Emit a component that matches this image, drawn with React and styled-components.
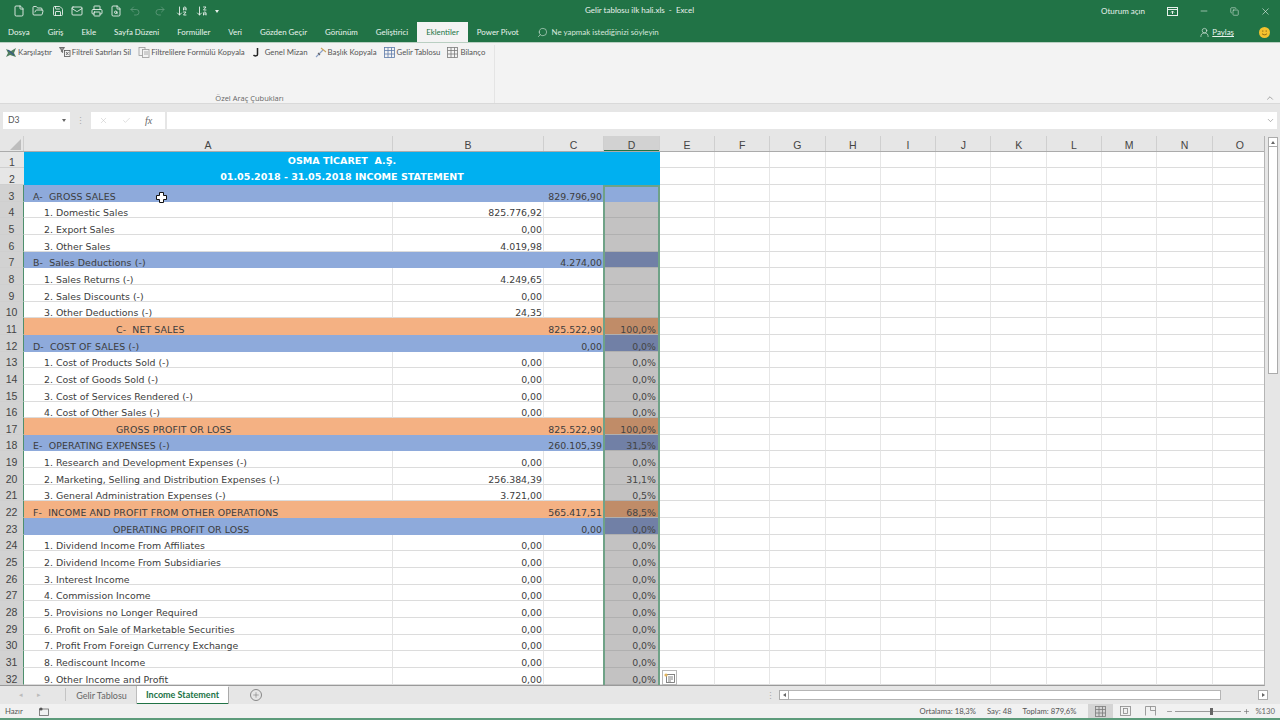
import React from "react"
import styled, { createGlobalStyle } from "styled-components"
import { File, FolderOpen, Save, Undo2, Redo2, ArrowDownAZ, ArrowDownZA, Search, UserRound, X, Minus, Check, Plus, ChevronUp, ChevronDown, Printer, FileSearch, Mail, Copy } from "lucide-react"

const GlobalStyle = createGlobalStyle`
  html, body { margin: 0; padding: 0; background: #e6e6e6; }
  body { font-family: Lato, "Open Sans", "Liberation Sans", sans-serif; overflow: hidden; }
`
const Page = styled.div`
  width: 1280px;
  height: 720px;
  display: flex;
  flex-direction: column;
  overflow: hidden;
  color: #444;
`
const TitleBar = styled.div`
  height: 22px;
  background: #217346;
  color: #e8f1ec;
  display: grid;
  grid-template-columns: 1fr 1fr;
  position: relative;
  font-size: 8px;
`
const Quick = styled.div`
  display: flex;
  align-items: center;
  padding-left: 13px;
  gap: 7.4px;
`
const WindowControls = styled.div`
  display: flex;
  align-items: center;
  justify-content: flex-end;
  gap: 20px;
  padding-right: 9px;
`
const SignIn = styled.span`
  margin-right: 2px;
`
const WinButton = styled.span`
  width: 11px;
  display: flex;
  justify-content: center;
`
const DocTitle = styled.div`
  position: absolute;
  left: 585px;
  top: 0;
  line-height: 21px;
  white-space: pre;
`
const TabBar = styled.div`
  height: 20px;
  background: #217346;
  display: flex;
  align-items: stretch;
  padding-left: 8px;
  color: #eaf3ee;
  font-size: 7.9px;
`
const Tab = styled.div`
  display: flex;
  align-items: center;
  justify-content: center;
  margin-right: 18px;
  ${p => p.$active && `
    background: #f3f3f3;
    color: #217346;
    padding: 0 9px;
    margin-left: -9px;
    margin-right: 9px;
  `}
`
const TellMe = styled.div`
  display: flex;
  align-items: center;
  gap: 4px;
  color: #d6e6dd;
`
const ShareArea = styled.div`
  margin-left: auto;
  display: flex;
  align-items: center;
  gap: 25px;
  padding-right: 10px;
`
const Share = styled.span`
  display: flex;
  align-items: center;
  gap: 2px;
  text-decoration: underline;
  text-decoration-thickness: 0.5px;
  text-underline-offset: 1px;
`
const Smile = styled.span`
  width: 11px;
  height: 11px;
  border-radius: 50%;
  background: #f4c22e;
  display: flex;
`
const Ribbon = styled.div`
  height: 62px;
  background: #f3f3f3;
  border-top: 1px solid #b9cfc2;
  border-bottom: 1px solid #d9d9d9;
  box-sizing: border-box;
  display: flex;
  position: relative;
`
const RibbonGroup = styled.div`
  width: 495px;
  margin: 2px 0 0;
  padding: 0 0 0 5px;
  box-sizing: border-box;
  border-right: 1px solid #e4e4e4;
  display: flex;
  flex-direction: column;
  justify-content: space-between;
`
const Tools = styled.div`
  display: flex;
  align-items: center;
  gap: 7px;
  height: 14px;
  font-size: 7.8px;
  color: #555;
`
const Tool = styled.span`
  display: flex;
  align-items: center;
  gap: ${p => p.$gap ?? 1}px;
  white-space: nowrap;
`
const GroupLabel = styled.div`
  text-align: center;
  font-family: "Open Sans", sans-serif;
  font-size: 7.5px;
  color: #666;
  line-height: 10px;
`
const Collapse = styled.span`
  position: absolute;
  right: 5px;
  bottom: 0;
  color: #777;
  display: flex;
`
const FormulaRow = styled.div`
  height: 32px;
  display: flex;
  align-items: center;
  gap: 2px;
  padding: 0 3px;
  background: #e6e6e6;
  box-sizing: border-box;
`
const NameBox = styled.div`
  width: 67px;
  height: 17px;
  background: #fff;
  font-size: 8.6px;
  color: #555;
  display: flex;
  align-items: center;
  justify-content: space-between;
  padding: 0 4px 0 5px;
  box-sizing: border-box;
`
const Caret = styled.span`
  width: 0;
  height: 0;
  border-left: 2.5px solid transparent;
  border-right: 2.5px solid transparent;
  border-top: 3px solid ${p => p.$color || "#666"};
`
const Grip = styled.span`
  width: 17px;
  text-align: center;
  color: #aaa;
  font-size: 9px;
`
const FxBox = styled.div`
  width: 74px;
  height: 17px;
  background: #fff;
  display: flex;
  align-items: center;
  gap: 14px;
  padding-left: 8px;
  box-sizing: border-box;
  color: #c4c4c4;
`
const Fx = styled.span`
  font-family: "Liberation Serif", serif;
  font-style: italic;
  font-size: 10px;
  color: #666;
`
const FormulaInput = styled.div`
  flex: 1;
  height: 17px;
  background: #fff;
  display: flex;
  align-items: center;
  justify-content: flex-end;
  padding-right: 2px;
  color: #777;
`
const SheetArea = styled.div`
  height: 550px;
  display: flex;
  background: #e6e6e6;
`
const SheetGrid = styled.div`
  width: 1265px;
  position: relative;
  overflow: hidden;
  background: #fff;
  border-right: 1px solid #b5b5b5;
  border-bottom: 1px solid #9a9a9a;
  box-sizing: border-box;
`
const COLUMNS = "24px 369px 151px 60px 56px 55px 55.3px 55.3px 55.3px 55.3px 55.3px 55.3px 55.3px 55.3px 55.3px 55.3px"
const HeaderRow = styled.div`
  display: grid;
  grid-template-columns: ${COLUMNS};
  height: 16px;
  border-bottom: 1px solid #ababab;
  box-sizing: border-box;
`
const ColHead = styled.div`
  display: flex;
  align-items: center;
  justify-content: center;
  padding-top: 3px;
  box-sizing: border-box;
  font-family: "Liberation Sans", sans-serif;
  font-size: 10.5px;
  line-height: 11px;
  color: #444;
  border-right: 1px solid #cfcfcf;
  background: ${p => p.$selected ? "#d2d2d2" : "#e6e6e6"};
  ${p => p.$selected && "box-shadow: inset 0 -1px 0 #217346;"}
`
const Corner = styled(ColHead)`
  position: relative;
`
const CornerMark = styled.span`
  position: absolute;
  right: 2px;
  bottom: 1px;
  width: 0;
  height: 0;
  border-left: 11px solid transparent;
  border-bottom: 11px solid #bdbdbd;
`
const Row = styled.div`
  display: grid;
  grid-template-columns: ${COLUMNS};
  grid-template-rows: ${p => p.$h}px;
  height: ${p => p.$h}px;
`
const RowHead = styled.div`
  display: flex;
  align-items: center;
  justify-content: center;
  padding-top: 5px;
  line-height: 10px;
  font-family: "Liberation Sans", sans-serif;
  font-size: 10.5px;
  color: #444;
  box-sizing: border-box;
  border-bottom: 1px solid #cfcfcf;
  background: ${p => p.$selected ? "#d2d2d2" : "#e6e6e6"};
  ${p => p.$selected && "border-right: 1px solid #4d8f6d;"}
`
const BAND = { blue: "#8eaadb", orange: "#f4b183", none: "#fff" }
const DIM = { blue: "#7180a6", orange: "#c08c68", none: "#c3c2c2" }
const Cell = styled.div`
  font-family: "DejaVu Sans", sans-serif;
  font-size: 9.4px;
  line-height: 9px;
  letter-spacing: ${p => p.$band === "none" ? 0 : 0.1}px;
  color: #3c3c3c;
  white-space: pre;
  display: flex;
  align-items: center;
  box-sizing: border-box;
  padding-top: 6px;
  background: ${p => BAND[p.$band]};
  border-bottom: 1px solid ${p => p.$band === "none" ? "#dcdcdc" : BAND[p.$band]};
  border-right: 1px solid ${p => p.$band === "none" ? "#e4e4e4" : BAND[p.$band]};
  padding-left: ${p => p.$indent || 0}px;
`
const NumCell = styled(Cell)`
  justify-content: flex-end;
  letter-spacing: 0;
  padding-right: 1px;
`
const PctCell = styled(NumCell)`
  background: ${p => p.$active ? BAND.blue : DIM[p.$band]};
  border-bottom: 1px solid ${p => p.$active ? BAND.blue : "#b0b0b0"};
  border-right: none;
  padding-right: 4px;
  color: #444;
`
const BlankCell = styled.div`
  box-sizing: border-box;
  background: #fff;
  border-bottom: 1px solid #dcdcdc;
  border-right: 1px solid #e6e6e6;
`
const TitleCell = styled.div`
  grid-column: span 4;
  background: #00b0f0;
  color: #fff;
  font-family: "DejaVu Sans", sans-serif;
  font-weight: 700;
  font-size: 9.55px;
  line-height: 12px;
  white-space: pre;
  display: flex;
  align-items: center;
  justify-content: center;
  padding-top: 1px;
  box-sizing: border-box;
`
const Selection = styled.div`
  position: absolute;
  left: 603px;
  top: 49px;
  width: 57px;
  bottom: -2px;
  border: 2px solid #6fa287;
  box-sizing: border-box;
  pointer-events: none;
`
const QuickAnalysis = styled.div`
  position: absolute;
  left: 662px;
  top: 534px;
  width: 15px;
  height: 15px;
  background: #fff;
  border: 1px solid #b8b8b8;
  box-sizing: border-box;
  display: flex;
  align-items: center;
  justify-content: center;
`
const CellCursor = styled.div`
  position: absolute;
  left: 156px;
  top: 56px;
  display: flex;
`
const VScroll = styled.div`
  width: 15px;
  display: flex;
  flex-direction: column;
  padding: 1px 2px 0 3px;
  box-sizing: border-box;
`
const ScrollButton = styled.div`
  width: 10px;
  height: 10px;
  flex-shrink: 0;
  background: #fff;
  border: 1px solid #ababab;
  box-sizing: border-box;
  display: flex;
  align-items: center;
  justify-content: center;
`
const Arrow = styled.span`
  width: 0;
  height: 0;
  ${p => p.$dir === "up" && "border-left: 2.5px solid transparent; border-right: 2.5px solid transparent; border-bottom: 3px solid #666;"}
  ${p => p.$dir === "left" && "border-top: 2.5px solid transparent; border-bottom: 2.5px solid transparent; border-right: 3px solid #666;"}
  ${p => p.$dir === "right" && "border-top: 2.5px solid transparent; border-bottom: 2.5px solid transparent; border-left: 3px solid #666;"}
`
const VThumb = styled.div`
  width: 10px;
  height: 227px;
  background: #fff;
  border: 1px solid #ababab;
  border-top: none;
  box-sizing: border-box;
`
const SheetTabs = styled.div`
  height: 18px;
  display: flex;
  align-items: stretch;
  background: #e6e6e6;
  font-size: 9px;
  color: #666;
`
const SheetNav = styled.div`
  width: 66px;
  display: flex;
  align-items: center;
  justify-content: center;
  gap: 14px;
  padding-right: 6px;
  box-sizing: border-box;
  border-right: 1px solid #c4c4c4;
  margin: 2px 0 3px;
  color: #bbb;
  font-size: 7px;
`
const SheetTab = styled.div`
  width: 71px;
  display: flex;
  align-items: center;
  justify-content: center;
`
const ActiveSheetTab = styled(SheetTab)`
  width: 91px;
  background: #fff;
  color: #217346;
  font-weight: 700;
  box-shadow: 1px 1px 0 #aaa, -1px 0 0 #bdbdbd;
  border-bottom: 1px solid #217346;
  box-sizing: border-box;
`
const AddSheet = styled.div`
  width: 10px;
  height: 10px;
  margin: 3px 0 0 22px;
  border: 1px solid #888;
  border-radius: 50%;
  display: flex;
  align-items: center;
  justify-content: center;
  color: #666;
`
const HScroll = styled.div`
  margin-left: auto;
  width: 514px;
  display: flex;
  align-items: center;
  padding-right: 12px;
  box-sizing: border-box;
`
const HGrip = styled.span`
  width: 13px;
  color: #aaa;
  font-size: 9px;
`
const HThumb = styled.div`
  width: 432px;
  height: 10px;
  background: #fff;
  border: 1px solid #b5b5b5;
  border-left: none;
  box-sizing: border-box;
`
const HTrack = styled.div`
  flex: 1;
`
const StatusBar = styled.div`
  height: 14px;
  background: #f1f1f1;
  display: flex;
  align-items: center;
  font-size: 7.7px;
  color: #555;
  padding-left: 5px;
`
const MacroIcon = styled.span`
  margin-left: 16px;
  display: flex;
`
const Stats = styled.div`
  margin-left: auto;
  display: flex;
  gap: 11px;
  margin-right: 12px;
`
const ViewButton = styled.div`
  width: 25px;
  height: 14px;
  display: flex;
  align-items: center;
  justify-content: center;
  background: ${p => p.$active ? "#d4d4d4" : "transparent"};
`
const Zoom = styled.div`
  display: flex;
  align-items: center;
  gap: 2px;
  margin-left: 3px;
  padding-right: 5px;
  color: #666;
`
const Slider = styled.div`
  width: 66px;
  height: 1px;
  background: #9a9a9a;
  position: relative;
`
const SliderThumb = styled.span`
  position: absolute;
  left: 35px;
  top: -3px;
  width: 3px;
  height: 7px;
  background: #666;
`
const ZoomValue = styled.span`
  margin-left: 3px;
`
const BottomLine = styled.div`
  height: 2px;
  background: #5d9b7b;
`

const qa = { size: 12, strokeWidth: 1.7, color: "#f2f7f4" }

const rows = [
  { n: 3, band: "blue", a: "A-  GROSS SALES", c: "829.796,90", active: true },
  { n: 4, a: "1. Domestic Sales", b: "825.776,92" },
  { n: 5, a: "2. Export Sales", b: "0,00" },
  { n: 6, a: "3. Other Sales", b: "4.019,98" },
  { n: 7, band: "blue", a: "B-  Sales Deductions (-)", c: "4.274,00" },
  { n: 8, a: "1. Sales Returns (-)", b: "4.249,65" },
  { n: 9, a: "2. Sales Discounts (-)", b: "0,00" },
  { n: 10, a: "3. Other Deductions (-)", b: "24,35" },
  { n: 11, band: "orange", center: 92, a: "C-  NET SALES", c: "825.522,90", d: "100,0%" },
  { n: 12, band: "blue", a: "D-  COST OF SALES (-)", c: "0,00", d: "0,0%" },
  { n: 13, a: "1. Cost of Products Sold (-)", b: "0,00", d: "0,0%" },
  { n: 14, a: "2. Cost of Goods Sold (-)", b: "0,00", d: "0,0%" },
  { n: 15, a: "3. Cost of Services Rendered (-)", b: "0,00", d: "0,0%" },
  { n: 16, a: "4. Cost of Other Sales (-)", b: "0,00", d: "0,0%" },
  { n: 17, band: "orange", center: 92, a: "GROSS PROFIT OR LOSS", c: "825.522,90", d: "100,0%" },
  { n: 18, band: "blue", a: "E-  OPERATING EXPENSES (-)", c: "260.105,39", d: "31,5%" },
  { n: 19, a: "1. Research and Development Expenses (-)", b: "0,00", d: "0,0%" },
  { n: 20, a: "2. Marketing, Selling and Distribution Expenses (-)", b: "256.384,39", d: "31,1%" },
  { n: 21, a: "3. General Administration Expenses (-)", b: "3.721,00", d: "0,5%" },
  { n: 22, band: "orange", a: "F-  INCOME AND PROFIT FROM OTHER OPERATIONS", c: "565.417,51", d: "68,5%" },
  { n: 23, band: "blue", center: 89, a: "OPERATING PROFIT OR LOSS", c: "0,00", d: "0,0%" },
  { n: 24, a: "1. Dividend Income From Affiliates", b: "0,00", d: "0,0%" },
  { n: 25, a: "2. Dividend Income From Subsidiaries", b: "0,00", d: "0,0%" },
  { n: 26, a: "3. Interest Income", b: "0,00", d: "0,0%" },
  { n: 27, a: "4. Commission Income", b: "0,00", d: "0,0%" },
  { n: 28, a: "5. Provisions no Longer Required", b: "0,00", d: "0,0%" },
  { n: 29, a: "6. Profit on Sale of Marketable Securities", b: "0,00", d: "0,0%" },
  { n: 30, a: "7. Profit From Foreign Currency Exchange", b: "0,00", d: "0,0%" },
  { n: 31, a: "8. Rediscount Income", b: "0,00", d: "0,0%" },
  { n: 32, a: "9. Other Income and Profit", b: "0,00", d: "0,0%" },
]
const heads = ["A", "B", "C", "D", "E", "F", "G", "H", "I", "J", "K", "L", "M", "N", "O"]
const blanks = heads.slice(4)

// rows are 16.65px in the real sheet, whole pixels keep the grid lines crisp
function rowHeight(n) {
  const top = i => Math.round((i - 3) * 16.655)
  return top(n + 1) - top(n)
}

function Blanks() {
  return blanks.map(h => <BlankCell key={h} />)
}

function DataRow({ n, band = "none", a, b, c, d, center, active }) {
  const indent = center ?? (band === "none" ? 20 : 9)
  return (
    <Row $h={rowHeight(n)}>
      <RowHead $selected>{n}</RowHead>
      <Cell $band={band} $indent={indent}>{a}</Cell>
      <NumCell $band={band}>{b}</NumCell>
      <NumCell $band={band}>{c}</NumCell>
      <PctCell $band={band} $active={active}>{d}</PctCell>
      <Blanks />
    </Row>
  )
}

function SmallGrid({ color = "#7a7a7a" }) {
  return (
    <svg width="11" height="11" viewBox="0 0 11 11" fill="none" stroke={color} strokeWidth="0.8">
      <rect x="0.5" y="0.5" width="10" height="10" />
      <path d="M0.5 3.5h10M0.5 7h10M4 0.5v10M7.5 0.5v10" />
    </svg>
  )
}

export default function App() {
  return (
    <Page>
      <GlobalStyle />
      <TitleBar>
        <Quick>
          <File {...qa} />
          <FolderOpen {...qa} />
          <Save {...qa} />
          <Mail {...qa} />
          <Printer {...qa} />
          <FileSearch {...qa} />
          <Undo2 {...qa} color="#5f9a7b" />
          <Redo2 {...qa} color="#5f9a7b" style={{ marginLeft: 5 }} />
          <ArrowDownAZ {...qa} style={{ marginLeft: 3 }} />
          <ArrowDownZA {...qa} />
          <Caret $color="#e8f1ec" />
        </Quick>
        <DocTitle>Gelir tablosu ilk hali.xls  -  Excel</DocTitle>
        <WindowControls>
          <SignIn>Oturum açın</SignIn>
          <WinButton>
            <svg width="11" height="9" viewBox="0 0 11 9" fill="none" stroke="#e8f1ec">
              <rect x="0.5" y="0.5" width="10" height="8" />
              <path d="M0.5 2.5h10M5.5 7V4M4 5.5l1.5-1.5L7 5.5" />
            </svg>
          </WinButton>
          <WinButton><Minus size={10} strokeWidth={1.4} /></WinButton>
          <WinButton><Copy size={9} strokeWidth={1.4} /></WinButton>
          <WinButton><X size={11} strokeWidth={1.3} /></WinButton>
        </WindowControls>
      </TitleBar>
      <TabBar>
        <Tab>Dosya</Tab>
        <Tab>Giriş</Tab>
        <Tab>Ekle</Tab>
        <Tab>Sayfa Düzeni</Tab>
        <Tab>Formüller</Tab>
        <Tab>Veri</Tab>
        <Tab>Gözden Geçir</Tab>
        <Tab>Görünüm</Tab>
        <Tab>Geliştirici</Tab>
        <Tab $active>Eklentiler</Tab>
        <Tab>Power Pivot</Tab>
        <TellMe>
          <Search size={11} strokeWidth={1.3} style={{ transform: "scaleX(-1)" }} />
          Ne yapmak istediğinizi söyleyin
        </TellMe>
        <ShareArea>
          <Share><UserRound size={11} strokeWidth={1.3} />Paylaş</Share>
          <Smile>
            <svg width="11" height="11" viewBox="0 0 11 11" fill="none" stroke="#7a5a10" strokeWidth="0.8">
              <path d="M3.8 3.4v1.4M7.2 3.4v1.4M3 6.6c.8 1.6 4.2 1.6 5 0" />
            </svg>
          </Smile>
        </ShareArea>
      </TabBar>
      <Ribbon>
        <RibbonGroup>
          <Tools>
            <Tool>
              <svg width="12" height="11" viewBox="0 0 12 11"><path d="M1 2l5 2 5-3-2 5 2 4-6-2-4 2 2-4z" fill="#4f7d5f" /><path d="M3 3l6 5" stroke="#2d4a9a" /></svg>
              Karşılaştır
            </Tool>
            <Tool>
              <svg width="12" height="11" viewBox="0 0 12 11" fill="none" stroke="#555" strokeWidth="0.8"><path d="M0.5 0.5h5L3.6 3v2.5L2.4 4.6V3z" fill="#999" /><rect x="5.5" y="3.5" width="5.5" height="6" /><path d="M7 5l2.5 3M9.5 5L7 8" /></svg>
              Filtreli Satırları Sil
            </Tool>
            <Tool>
              <svg width="12" height="11" viewBox="0 0 12 11" fill="none" stroke="#9a9a9a" strokeWidth="0.8"><rect x="1" y="0.5" width="6" height="8" /><rect x="4.5" y="2.5" width="6.5" height="8" fill="#f3f3f3" /><path d="M6 5h4M6 7h4" /></svg>
              Filtrelilere Formülü Kopyala
            </Tool>
            <Tool $gap={5}>
              <svg width="8" height="11" viewBox="0 0 8 11" fill="none" stroke="#222" strokeWidth="1.5"><path d="M5.5 1v6.5c0 1.6-3 1.8-4 .6" /></svg>
              Genel Mizan
            </Tool>
            <Tool>
              <svg width="12" height="11" viewBox="0 0 12 11" fill="none" strokeWidth="1.1"><path d="M1 10l7-7" stroke="#8aa0c8" /><path d="M6 1l5 4" stroke="#c9a25a" /><path d="M3 6l2 2" stroke="#666" /></svg>
              Başlık Kopyala
            </Tool>
            <Tool $gap={2}>
              <SmallGrid color="#5d7aa8" />
              Gelir Tablosu
            </Tool>
            <Tool $gap={2}>
              <SmallGrid />
              Bilanço
            </Tool>
          </Tools>
          <GroupLabel>Özel Araç Çubukları</GroupLabel>
        </RibbonGroup>
        <Collapse><ChevronUp size={10} strokeWidth={1.5} /></Collapse>
      </Ribbon>
      <FormulaRow>
        <NameBox>D3<Caret /></NameBox>
        <Grip>⋮</Grip>
        <FxBox>
          <X size={9} strokeWidth={1.4} />
          <Check size={9} strokeWidth={1.4} />
          <Fx>fx</Fx>
        </FxBox>
        <FormulaInput><ChevronDown size={9} strokeWidth={1.5} /></FormulaInput>
      </FormulaRow>
      <SheetArea>
        <SheetGrid>
          <HeaderRow>
            <Corner><CornerMark /></Corner>
            {heads.map(h => <ColHead key={h} $selected={h === "D"}>{h}</ColHead>)}
          </HeaderRow>
          <Row $h={16}>
            <RowHead>1</RowHead>
            <TitleCell>OSMA TİCARET  A.Ş.</TitleCell>
            <Blanks />
          </Row>
          <Row $h={17}>
            <RowHead>2</RowHead>
            <TitleCell>01.05.2018 - 31.05.2018 INCOME STATEMENT</TitleCell>
            <Blanks />
          </Row>
          {rows.map(r => <DataRow key={r.n} {...r} />)}
          <Selection />
          <QuickAnalysis>
            <svg width="11" height="10" viewBox="0 0 11 10" fill="none" stroke="#666" strokeWidth="0.8">
              <rect x="2.5" y="1.5" width="8" height="8" />
              <path d="M4 4h5M4 6h5M4 8h3" />
              <circle cx="2" cy="2" r="1.6" fill="#e2b35c" stroke="none" />
            </svg>
          </QuickAnalysis>
          <CellCursor>
            <svg width="11" height="11" viewBox="0 0 11 11">
              <path d="M3.5 0.5h4v3h3v4h-3v3h-4v-3h-3v-4h3z" fill="#fff" stroke="#111" strokeWidth="1" />
            </svg>
          </CellCursor>
        </SheetGrid>
        <VScroll>
          <ScrollButton><Arrow $dir="up" /></ScrollButton>
          <VThumb />
        </VScroll>
      </SheetArea>
      <SheetTabs>
        <SheetNav><span>◂</span><span>▸</span></SheetNav>
        <SheetTab>Gelir Tablosu</SheetTab>
        <ActiveSheetTab>Income Statement</ActiveSheetTab>
        <AddSheet><Plus size={8} strokeWidth={1.5} /></AddSheet>
        <HScroll>
          <HGrip>⋮</HGrip>
          <ScrollButton><Arrow $dir="left" /></ScrollButton>
          <HThumb />
          <HTrack />
          <ScrollButton><Arrow $dir="right" /></ScrollButton>
        </HScroll>
      </SheetTabs>
      <StatusBar>
        Hazır
        <MacroIcon>
          <svg width="10" height="9" viewBox="0 0 10 9" fill="none" stroke="#666" strokeWidth="0.8">
            <rect x="0.5" y="2" width="9" height="6.5" />
            <circle cx="2" cy="2" r="1.6" fill="#555" stroke="none" />
          </svg>
        </MacroIcon>
        <Stats>
          <span>Ortalama: 18,3%</span>
          <span>Say: 48</span>
          <span>Toplam: 879,6%</span>
        </Stats>
        <ViewButton $active><SmallGrid /></ViewButton>
        <ViewButton>
          <svg width="11" height="10" viewBox="0 0 11 10" fill="none" stroke="#888" strokeWidth="0.8"><rect x="0.5" y="0.5" width="10" height="9" /><rect x="3.5" y="2.5" width="4" height="5" /></svg>
        </ViewButton>
        <ViewButton>
          <svg width="11" height="10" viewBox="0 0 11 10" fill="none" stroke="#888" strokeWidth="0.8"><path d="M0.5 9.5v-9h10v9M5.5 0.5v4h5" /></svg>
        </ViewButton>
        <Zoom>
          <Minus size={7} strokeWidth={2} />
          <Slider><SliderThumb /></Slider>
          <Plus size={7} strokeWidth={2} />
          <ZoomValue>%130</ZoomValue>
        </Zoom>
      </StatusBar>
      <BottomLine />
    </Page>
  )
}
